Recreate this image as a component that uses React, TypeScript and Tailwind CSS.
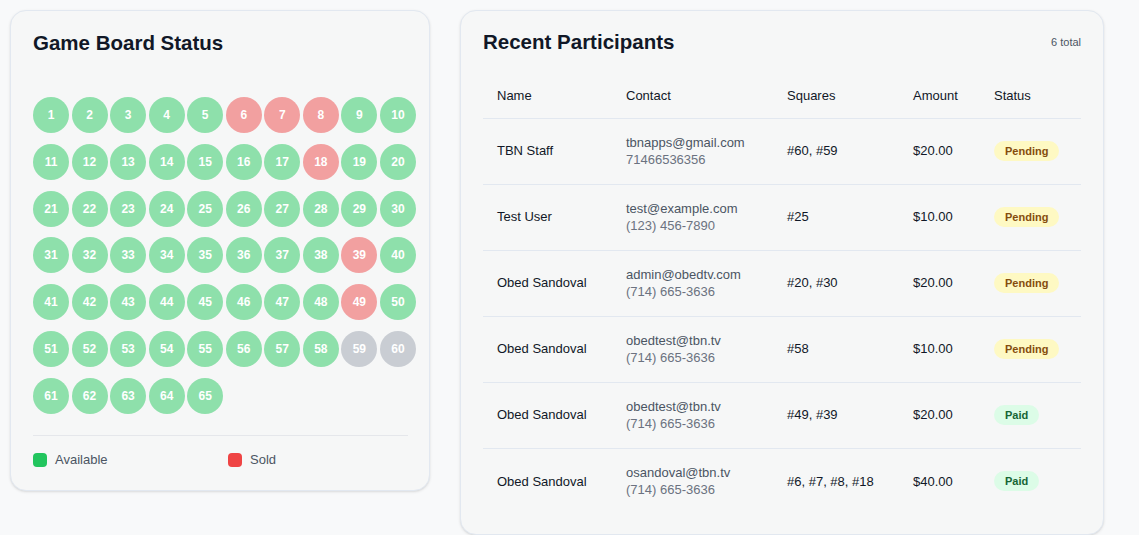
import React from 'react'

const sold = [6, 7, 8, 18, 39, 49]
const held = [59, 60]

const participants = [
  { name: 'TBN Staff', email: 'tbnapps@gmail.com', phone: '71466536356', squares: '#60, #59', amount: '$20.00', status: 'Pending' },
  { name: 'Test User', email: 'test@example.com', phone: '(123) 456-7890', squares: '#25', amount: '$10.00', status: 'Pending' },
  { name: 'Obed Sandoval', email: 'admin@obedtv.com', phone: '(714) 665-3636', squares: '#20, #30', amount: '$20.00', status: 'Pending' },
  { name: 'Obed Sandoval', email: 'obedtest@tbn.tv', phone: '(714) 665-3636', squares: '#58', amount: '$10.00', status: 'Pending' },
  { name: 'Obed Sandoval', email: 'obedtest@tbn.tv', phone: '(714) 665-3636', squares: '#49, #39', amount: '$20.00', status: 'Paid' },
  { name: 'Obed Sandoval', email: 'osandoval@tbn.tv', phone: '(714) 665-3636', squares: '#6, #7, #8, #18', amount: '$40.00', status: 'Paid' },
]

function Square({ n }: { n: number }) {
  const color = sold.includes(n) ? 'bg-[#f2a0a0]' : held.includes(n) ? 'bg-[#c9cdd3]' : 'bg-[#8ee0ab]'
  return (
    <div className={`w-9 h-9 rounded-full flex items-center justify-center text-white text-[12px] font-bold ${color}`}>
      {n}
    </div>
  )
}

function Badge({ status }: { status: string }) {
  const paid = status === 'Paid'
  return (
    <span className={`inline-flex items-center h-[20px] px-[11px] rounded-full text-[11px] font-semibold ${paid ? 'bg-[#dcfce7] text-[#166534]' : 'bg-[#fef9c3] text-[#854d0e]'}`}>
      {status}
    </span>
  )
}

export default function App() {
  return (
    <div className="min-h-screen bg-[#f8f9fa] font-['Liberation_Sans',Arial,sans-serif] flex items-start gap-[30px] p-[10px]">
      <div className="w-[420px] rounded-2xl border border-[#e2e8f0] bg-[#f6f7f7] shadow-sm px-[22px] pt-[18px] pb-[21px]">
        <h2 className="text-[20.5px] leading-[28px] font-bold text-[#111827]">Game Board Status</h2>
        <div className="mt-[40px] grid grid-cols-[repeat(10,36px)] gap-x-[2.56px] gap-y-[10.8px]">
          {Array.from({ length: 65 }, (_, i) => <Square key={i} n={i + 1} />)}
        </div>
        <div className="mt-[21px] border-t border-gray-200 w-[375px]" />
        <div className="flex pt-[14px] text-[13px] text-[#4b5563]">
          <div className="flex items-center w-[195px]">
            <span className="w-3.5 h-3.5 rounded bg-[#22c55e] mr-2" />
            Available
          </div>
          <div className="flex items-center">
            <span className="w-3.5 h-3.5 rounded bg-[#ef4444] mr-2" />
            Sold
          </div>
        </div>
      </div>

      <div className="w-[644px] rounded-2xl border border-[#e2e8f0] bg-[#f6f7f7] shadow-sm px-[22px] pt-[17px] pb-[20px]">
        <div className="flex items-center justify-between">
          <h2 className="text-[20.5px] leading-[28px] font-bold text-[#111827]">Recent Participants</h2>
          <span className="text-[11px] text-[#4b5563]">6 total</span>
        </div>
        <table className="mt-[18px] w-full text-[13px] text-[#111827] border-collapse">
          <thead>
            <tr className="border-b border-[#e2e8f0] h-[44px]">
              <th className="w-[129px] px-[14px] text-left font-normal">Name</th>
              <th className="w-[161px] px-[14px] text-left font-normal">Contact</th>
              <th className="w-[126px] px-[14px] text-left font-normal">Squares</th>
              <th className="w-[81px] px-[14px] text-left font-normal">Amount</th>
              <th className="px-[14px] text-left font-normal">Status</th>
            </tr>
          </thead>
          <tbody>
            {participants.map((p, i) => (
              <tr key={i} className={`h-[66px] ${i < participants.length - 1 ? 'border-b border-[#e2e8f0]' : ''}`}>
                <td className="px-[14px]">{p.name}</td>
                <td className="px-[14px] leading-[17px]">
                  <div className="text-[#4b5563]">{p.email}</div>
                  <div className="text-[#6b7280]">{p.phone}</div>
                </td>
                <td className="px-[14px]">{p.squares}</td>
                <td className="px-[14px]">{p.amount}</td>
                <td className="px-[14px]"><Badge status={p.status} /></td>
              </tr>
            ))}
          </tbody>
        </table>
      </div>
    </div>
  )
}
